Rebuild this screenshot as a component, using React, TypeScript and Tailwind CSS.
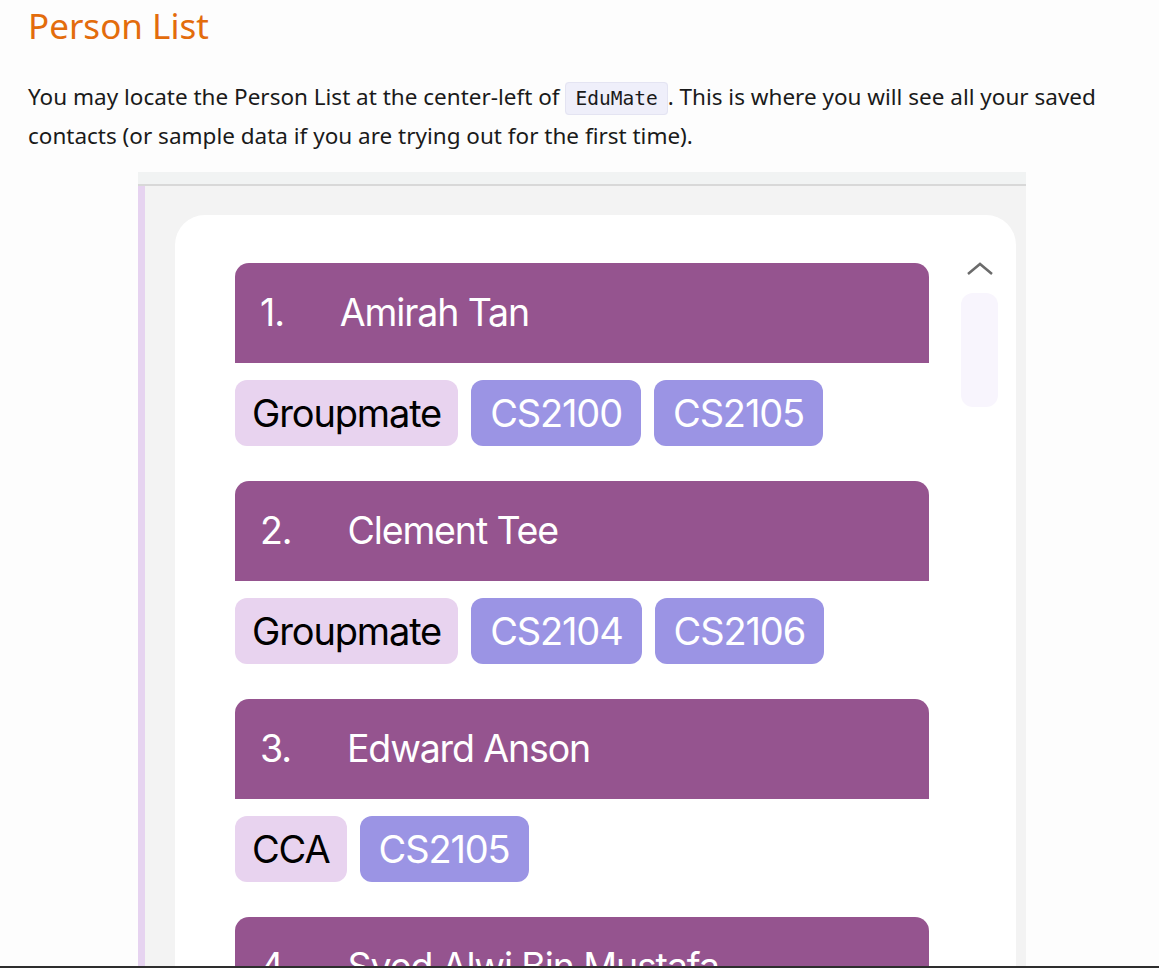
const people = [
  { n: "1.", name: "Amirah Tan", tags: ["Groupmate", "CS2100", "CS2105"] },
  { n: "2.", name: "Clement Tee", tags: ["Groupmate", "CS2104", "CS2106"] },
  { n: "3.", name: "Edward Anson", tags: ["CCA", "CS2105"] },
  { n: "4.", name: "Syed Alwi Bin Mustafa", tags: ["Groupmate"] },
];

function Tag({ label }: { label: string }) {
  const isModule = label.startsWith("CS");
  return (
    <span
      className={
        "h-[66px] flex items-center rounded-[12px] text-[38px] tracking-[-0.03em] " +
        (isModule ? "px-[19px] bg-[#9b94e4] text-white" : "px-[17px] bg-[#e8d3ef] text-black")
      }
    >
      {label}
    </span>
  );
}

function PersonCard({ n, name, tags }: { n: string; name: string; tags: string[] }) {
  return (
    <div className="flex flex-col">
      <div className="h-[100px] bg-[#95548f] rounded-t-[14px] flex items-center pl-[25px] text-white text-[37.5px] tracking-[-0.03em]">
        <span className="mr-[56px]">{n}</span>
        <span>{name}</span>
      </div>
      <div className="flex gap-[13px] mt-[17px]">
        {tags.map((t) => (
          <Tag key={t} label={t} />
        ))}
      </div>
    </div>
  );
}

export default function App() {
  return (
    <div className="h-[968px] flex flex-col bg-[#fdfdfd] overflow-hidden">
      <div className="flex-1 overflow-hidden px-[28px]">
        <h2 className="text-[#e36c0c] text-[35px] leading-none pt-[8px] font-['Noto_Sans',sans-serif]">
          Person List
        </h2>
        <p className="mt-[35px] text-[#1a1a1a] text-[22.5px] leading-[37px] font-['Noto_Sans',sans-serif] w-[1100px]">
          You may locate the Person List at the center-left of{" "}
          <code className="bg-[#efeffa] border border-[#e4e4f2] rounded-[4px] px-[9px] py-[4px] text-[19.5px] font-['DejaVu_Sans_Mono',monospace]">
            EduMate
          </code>
          . This is where you will see all your saved contacts (or sample data if you are trying out for the first time).
        </p>

        <div className="ml-[110px] mt-[18px] w-[888px] flex flex-col font-['Inter',sans-serif]">
          <div className="h-[14px] bg-[#f1f3f3] border-b-2 border-[#d8d8d8]" />
          <div className="flex bg-[#f3f3f3] h-[900px]">
            <div className="w-[7px] bg-[#e6d3f0]" />
            <div className="flex-1 pl-[30px] pr-[10px] pt-[29px]">
              <div className="bg-white rounded-t-[30px] h-full flex pl-[60px] pt-[48px]">
                <div className="w-[694px] flex flex-col gap-[35px]">
                  {people.map((p) => (
                    <PersonCard key={p.n} {...p} />
                  ))}
                </div>
                <div className="w-[37px] ml-[32px] flex flex-col items-center">
                  <svg width="28" height="16" viewBox="0 0 28 16" className="mt-[-2px]">
                    <path d="M2 13 L14 3 L26 13" fill="none" stroke="#6b6b6b" strokeWidth="2.5" />
                  </svg>
                  <div className="mt-[16px] w-[37px] h-[114px] rounded-[12px] bg-[#f8f5fd]" />
                </div>
              </div>
            </div>
          </div>
        </div>
      </div>
      <div className="h-[2px] bg-[#2e2e2e]" />
    </div>
  );
}
